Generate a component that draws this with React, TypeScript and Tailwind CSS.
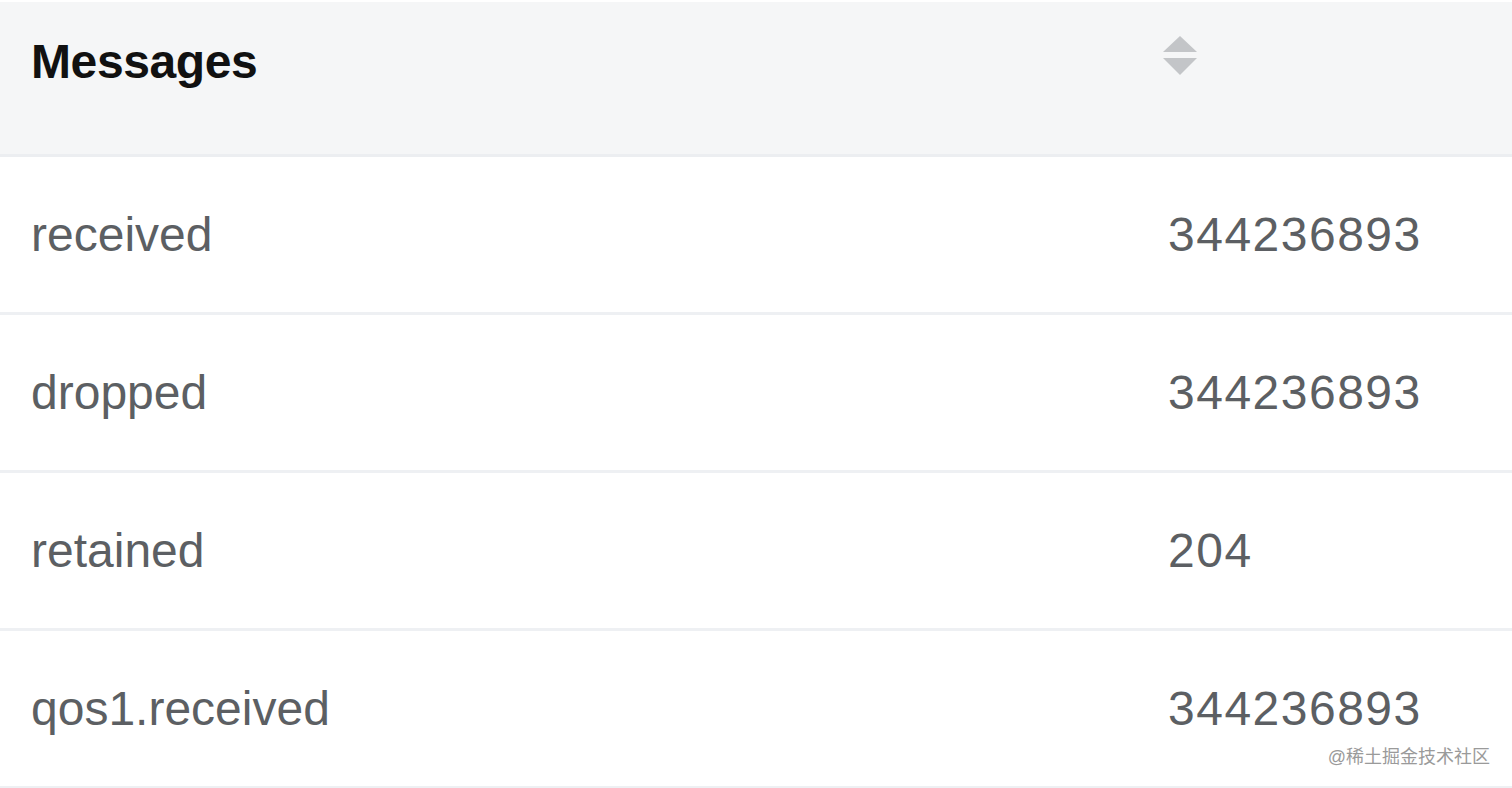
const rows = [
  { name: "received", value: "344236893" },
  { name: "dropped", value: "344236893" },
  { name: "retained", value: "204" },
  { name: "qos1.received", value: "344236893" },
];

// simple up/down sort caret
function SortIcon() {
  return (
    <svg width="34" height="40" viewBox="0 0 34 40" className="block">
      <polygon points="17,0 34,16 0,16" fill="#c3c5c8" />
      <polygon points="0,22 34,22 17,39" fill="#c3c5c8" />
    </svg>
  );
}

export default function App() {
  return (
    <div
      className="w-[1512px] h-[788px] bg-white overflow-hidden relative"
      style={{ fontFamily: '"Liberation Sans", Arial, sans-serif' }}
    >
      <div className="h-[2px] bg-white" />
      {/* header */}
      <div className="grid grid-cols-[1137px_1fr] h-[155px] bg-[#f5f6f7] border-b-[3px] border-[#eceef1]">
        <div className="pl-[31px] pt-[36px] text-[48px] leading-none font-bold tracking-[-0.4px] text-[#111]">
          Messages
        </div>
        <div className="pl-[26px] pt-[34px]">
          <SortIcon />
        </div>
      </div>

      {/* rows */}
      {rows.map((r) => (
        <div
          key={r.name}
          className="grid grid-cols-[1137px_1fr] items-center h-[158px] border-b-[3px] border-[#eef0f3] text-[48px] leading-none text-[#5c5f63]"
        >
          <div className="pl-[31px]">{r.name}</div>
          <div className="pl-[31px] tracking-[1.5px]">{r.value}</div>
        </div>
      ))}

      {/* watermark */}
      <div
        className="absolute right-[22px] top-[744px] text-[18px] text-[#9a9a9a]"
        style={{ fontFamily: '"Liberation Sans", "Noto Sans CJK SC", sans-serif' }}
      >
        @稀土掘金技术社区
      </div>
    </div>
  );
}
